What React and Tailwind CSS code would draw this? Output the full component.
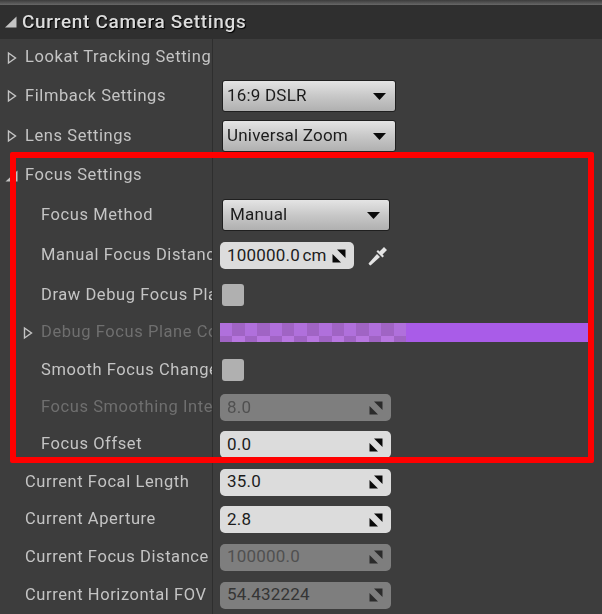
import React from 'react';

const sans = "font-['Roboto','Liberation_Sans',sans-serif]";

function SpinIcon({ dim }) {
  return (
    <svg width="14" height="14" viewBox="0 0 14 14" className="shrink-0">
      <path d="M0.5 13.5V5L9 13.5Z" fill={dim ? '#2b2b2b' : '#0a0a0a'} />
      <path d="M13.5 0.5V9L5 0.5Z" fill={dim ? '#2b2b2b' : '#0a0a0a'} />
    </svg>
  );
}

function Caret({ open }) {
  if (open) {
    return (
      <svg width="13" height="13" viewBox="0 0 13 13" className="shrink-0">
        <path d="M0.5 12H12.5V1Z" fill="#c4c4c4" />
      </svg>
    );
  }
  return (
    <svg width="10" height="14" viewBox="0 0 10 14" className="shrink-0">
      <path d="M1.5 2L8.5 7L1.5 12Z" fill="none" stroke="#c4c4c4" strokeWidth="1.4" />
    </svg>
  );
}

function Dropdown({ label, width, pad = 'pl-[4px]' }) {
  return (
    <div className={`${width} h-[32px] ml-[9px] ${pad} pr-[9px] rounded-[3px] border border-[#1f1f1f] bg-gradient-to-b from-[#e4e4e4] via-[#c8c8c8] to-[#b0b0b0] flex items-center justify-between text-[17px] tracking-[0.2px] text-[#1c1c1c]`}>
      <span>{label}</span>
      <svg width="13" height="7" viewBox="0 0 13 7">
        <path d="M0 0H13L6.5 7Z" fill="#0a0a0a" />
      </svg>
    </div>
  );
}

function NumberBox({ value, width = 'w-[171px]', dim, faint }) {
  return (
    <div className={`${width} h-[27px] ml-[7px] pl-[7px] pr-[8px] rounded-[5px] flex items-center justify-between text-[17px] tracking-[0.2px] [word-spacing:-2px] ${dim ? 'bg-[#7e7e7e]' : 'bg-[#dcdcdc]'} ${faint ? 'text-[#505050]' : dim ? 'text-[#353535]' : 'text-[#1c1c1c]'}`}>
      <span>{value}</span>
      <SpinIcon dim={dim} />
    </div>
  );
}

function Checkbox() {
  return <div className="w-[22px] h-[22px] ml-[9px] rounded-[3px] bg-[#b0b0b0]" />;
}

function ColorBar() {
  const cells = Array.from({ length: 15 });
  return (
    <div className="flex-1 h-[19px] ml-[7px] mr-[14px] bg-[#a95ce8] flex items-stretch">
      <div className="w-[186px] flex flex-col">
        <div className="h-[13px] flex">
          {cells.map((_, i) => (
            <div key={i} className={`flex-1 ${i % 2 ? 'bg-[#a064c4]' : 'bg-[#b070dc]'}`} />
          ))}
        </div>
        <div className="h-[6px] flex">
          {cells.map((_, i) => (
            <div key={i} className={`flex-1 ${i % 2 ? 'bg-[#b877e0]' : 'bg-[#a064c4]'}`} />
          ))}
        </div>
      </div>
    </div>
  );
}

function Row({ h, label, indent, caret, dim, children }) {
  return (
    <div className="flex items-center" style={{ height: h }}>
      <div className={`w-[213px] shrink-0 h-full border-r border-[#2e2e2e] flex items-center overflow-hidden whitespace-nowrap ${indent ? 'pl-[41px]' : 'pl-[25px]'} relative`}>
        {caret && (
          <span className={`absolute top-1/2 -translate-y-1/2 ${caret === 'open' ? 'left-[5px]' : indent ? 'left-[23px]' : 'left-[7px]'}`}>
            <Caret open={caret === 'open'} />
          </span>
        )}
        <span className={`text-[16.5px] tracking-[0.58px] ${dim ? 'text-[#6f6f6f]' : 'text-[#c4c4c4]'}`}>{label}</span>
      </div>
      {children}
    </div>
  );
}

export default function App() {
  return (
    <div className="w-[602px] h-[614px] overflow-hidden bg-[#3d3d3d]">
      <div className={`relative h-[614px] blur-[0.5px] ${sans}`}>
        {/* Category header */}
        <div className="h-[5px] bg-gradient-to-b from-[#3c3c3c] to-[#686868]" />
        <div className="h-[34px] bg-[#2f2f2f] flex items-center pl-[4px] gap-[4px]">
          <svg width="14" height="14" viewBox="0 0 14 14" className="shrink-0">
            <path d="M1 12.5H12.5V1.5Z" fill="#c4c4c4" />
          </svg>
          <span className="text-[19px] font-medium tracking-[0.67px] text-[#dcdcdc] [text-shadow:1px_1px_1px_#000]">Current Camera Settings</span>
        </div>

        {/* Properties */}
        <Row h={37} label="Lookat Tracking Settings" caret="closed" />
        <Row h={40} label="Filmback Settings" caret="closed"><Dropdown label="16:9 DSLR" width="w-[174px]" /></Row>
        <Row h={40} label="Lens Settings" caret="closed"><Dropdown label="Universal Zoom" width="w-[174px]" /></Row>
        <Row h={39} label="Focus Settings" caret="open" />
        <Row h={40} label="Focus Method" indent><Dropdown label="Manual" width="w-[168px]" pad="pl-[7px]" /></Row>
        <Row h={41} label="Manual Focus Distance" indent>
          <NumberBox value="100000.0 cm" width="w-[134px]" />
          <svg width="22" height="22" viewBox="0 0 22 22" className="ml-[13px]">
            <path d="M2.5 20L1.5 18.5L10 9L13 12L3.5 20.5Z" fill="#e4e4e4" />
            <path d="M9.5 6.5L15.5 12.5L17 11L15.5 9.5L20 5L17 2L12.5 6.5L11 5Z" fill="#e4e4e4" />
          </svg>
        </Row>
        <Row h={38} label="Draw Debug Focus Plane" indent><Checkbox /></Row>
        <Row h={37} label="Debug Focus Plane Color" indent caret="closed" dim><ColorBar /></Row>
        <Row h={38} label="Smooth Focus Changes" indent><Checkbox /></Row>
        <Row h={37} label="Focus Smoothing Interp Speed" indent dim><NumberBox value="8.0" dim faint /></Row>
        <Row h={37} label="Focus Offset" indent><NumberBox value="0.0" /></Row>
        <Row h={38} label="Current Focal Length"><NumberBox value="35.0" /></Row>
        <Row h={37} label="Current Aperture"><NumberBox value="2.8" /></Row>
        <Row h={38} label="Current Focus Distance"><NumberBox value="100000.0" dim faint /></Row>
        <Row h={38} label="Current Horizontal FOV"><NumberBox value="54.432224" dim /></Row>

        {/* Red highlight drawn over the screenshot */}
        <div className="absolute left-[10px] top-[152px] w-[584px] h-[311px] border-[6px] border-[#ff0000] rounded-[2px] pointer-events-none" />
      </div>
    </div>
  );
}
